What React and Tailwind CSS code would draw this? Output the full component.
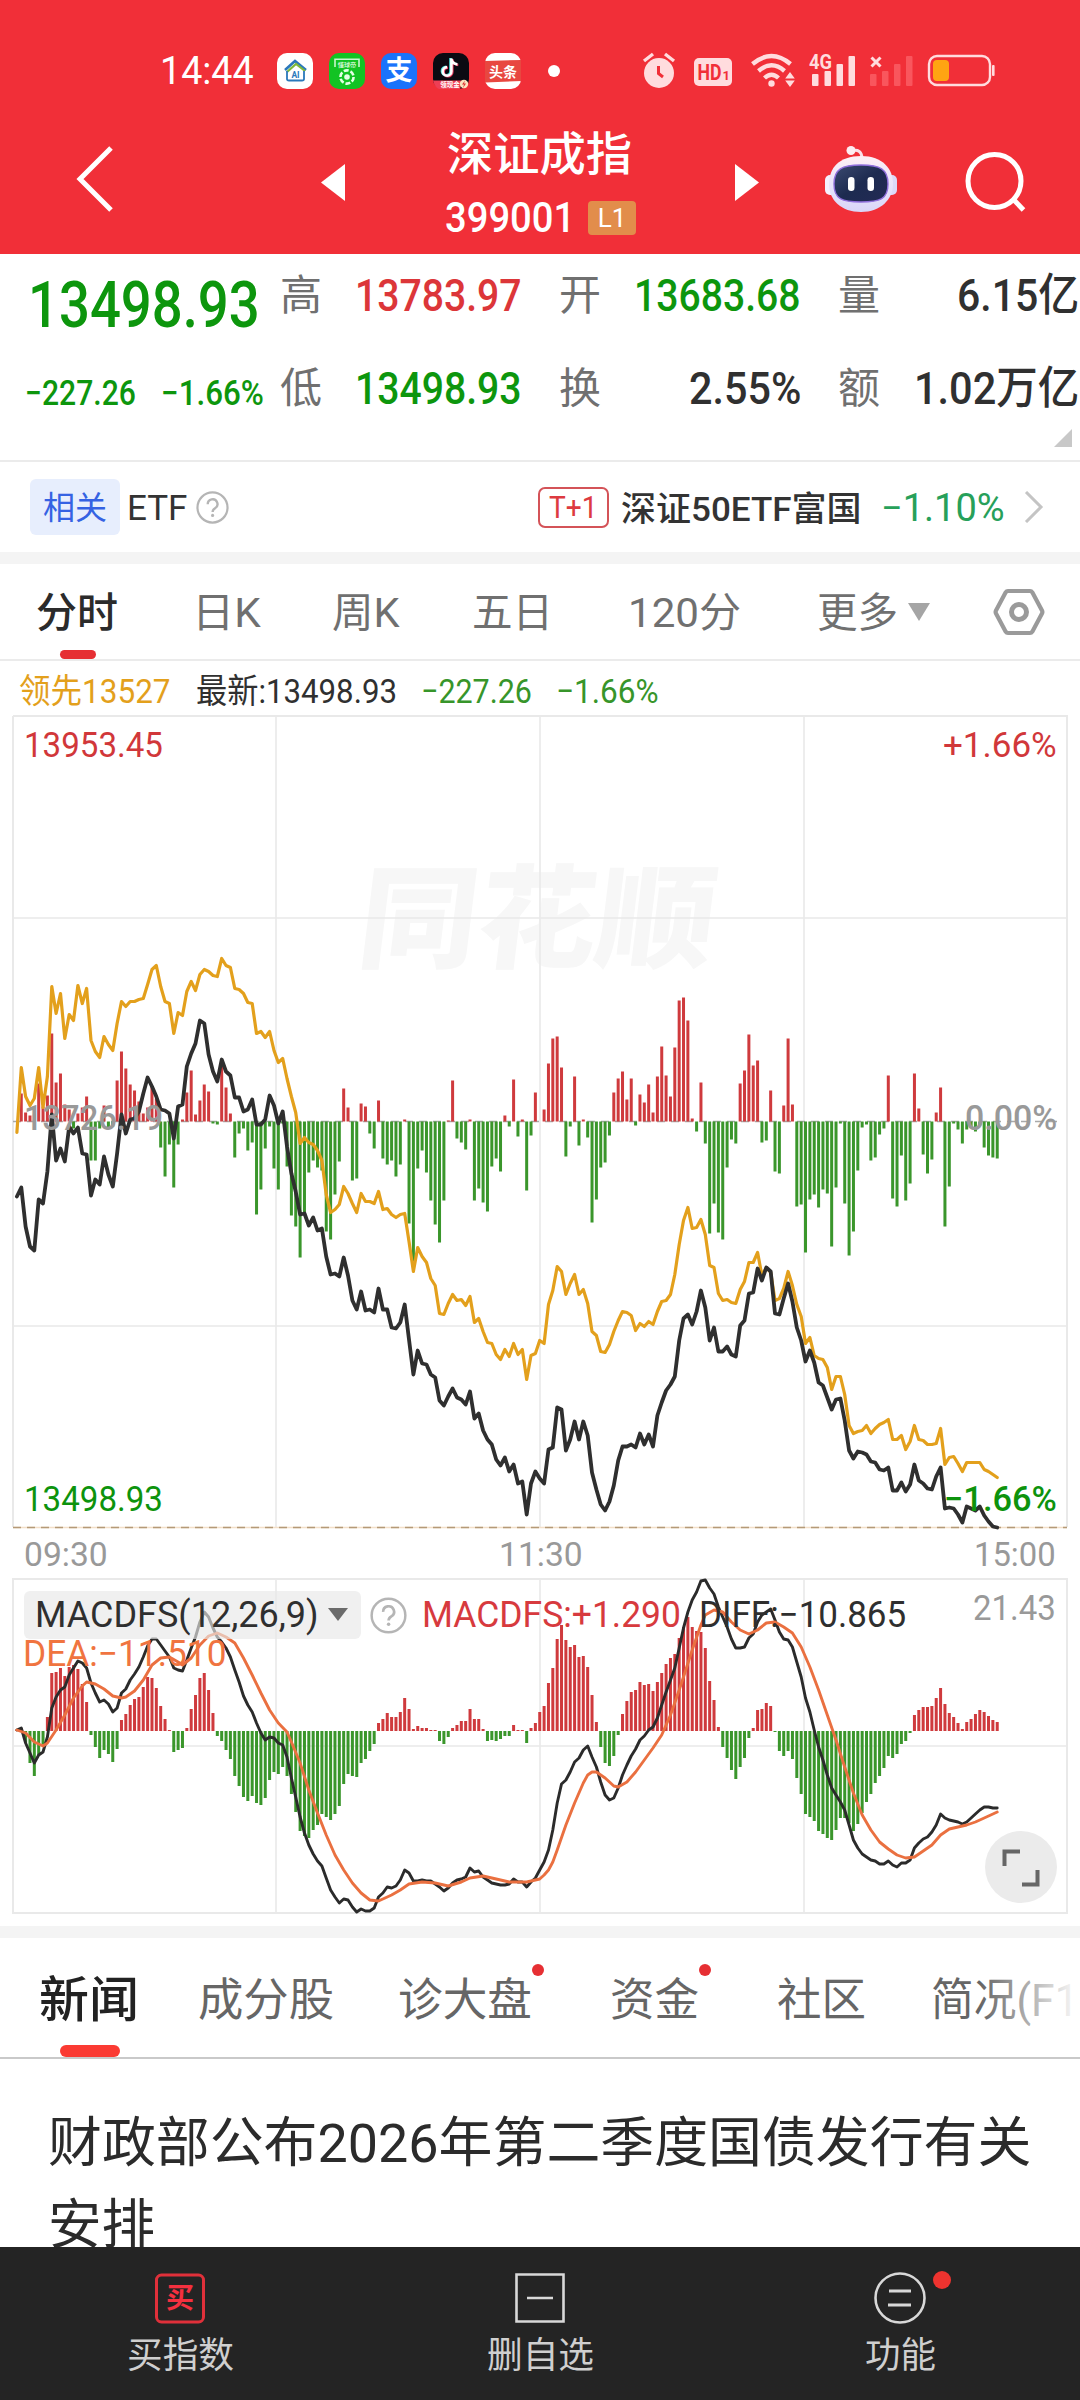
import { useLayoutEffect, useRef, useState } from "react";

const STEP = 4.357;
const X0 = 16.9;

// 成交量柱:正值向上(红),负值向下(绿)
const volumeBars = [
    0, 28, 9, 6, 7, 38, 15, 26, 88, 39, 48, 17, 12, -7, 8, 14, 25, -39, -39, -7,
    16, -7, -5, 41, 70, 53, 37, 31, 20, 8, 14, 35, 23, -26, -55, -23, -66, -23, 2, 29,
    51, 7, 21, 37, 30, -2, -3, 55, 34, 8, -36, -12, -7, -29, -21, -93, -68, -27, -5, -47,
    -68, -2, -45, -94, -105, -136, -92, -51, -39, -46, -49, -110, -118, -73, -40, 33, 14, -59, -57, 18,
    15, -12, -27, 21, -37, -43, -39, -55, -43, 2, -102, -140, -47, -29, -51, -79, -103, -121, -79, 1,
    41, -17, -21, -28, 2, -79, -67, -81, -90, -45, -37, -50, 6, -5, 42, -15, 2, -69, -14, 29,
    0, 12, 58, 83, 85, 54, -35, -5, 45, -24, 2, -16, -101, -78, -46, -41, -14, 29, 43, 50,
    22, 43, -4, 27, 19, 37, 9, 45, 75, 46, 25, 74, 121, 124, 101, 3, -10, 39, -22, -112,
    -82, -111, -118, -46, -18, -22, 38, 51, 87, 56, 61, -21, -19, 31, -50, -52, 16, 83, 17, -85,
    -83, -131, -78, -73, -86, -68, -72, -125, -66, -2, -82, -134, -110, -49, -6, -3, -39, -36, -13, -7,
    46, -77, -85, -34, -79, -62, 48, 13, -33, -52, -38, 9, 34, -105, -65, -2, -8, -22, -8, -6,
    -10, -4, -26, -34, -36, -37,
];

// 领先线
const leadLine = [
    -11, 54, 25, 16, 23, 54, 14, 45, 135, 108, 128, 83, 107, 101, 136, 118, 133, 81, 70, 64,
    85, 77, 71, 98, 120, 115, 120, 120, 122, 123, 137, 152, 156, 135, 120, 118, 88, 109, 106, 130,
    140, 131, 147, 152, 150, 146, 145, 163, 156, 154, 133, 132, 128, 119, 118, 88, 90, 84, 90, 71,
    59, 63, 43, 25, 9, -22, -16, -21, -23, -29, -39, -73, -91, -88, -83, -65, -72, -82, -91, -72,
    -80, -80, -82, -70, -88, -87, -93, -96, -93, -92, -120, -150, -126, -135, -141, -157, -164, -192, -193, -182,
    -173, -179, -178, -184, -175, -201, -197, -210, -221, -222, -233, -238, -228, -235, -222, -233, -228, -258, -234, -232,
    -219, -222, -183, -169, -145, -150, -173, -162, -153, -173, -168, -182, -210, -214, -230, -231, -223, -210, -199, -190,
    -191, -194, -209, -202, -205, -200, -203, -190, -180, -179, -173, -153, -123, -99, -86, -107, -106, -98, -113, -144,
    -146, -172, -179, -178, -181, -182, -168, -160, -141, -141, -131, -154, -146, -151, -179, -177, -167, -150, -164, -183,
    -195, -222, -216, -234, -237, -238, -246, -268, -255, -255, -273, -304, -312, -310, -309, -304, -312, -307, -303, -301,
    -298, -318, -318, -314, -328, -320, -304, -318, -319, -323, -323, -322, -307, -343, -336, -335, -342, -350, -341, -341,
    -341, -341, -348, -350, -353, -356,
];

// 最新价
const priceLine = [
    -75, -66, -105, -125, -129, -78, -82, -50, 7, -39, -27, -40, -5, -12, -6, -32, -33, -74, -58, -63,
    -35, -53, -65, -32, 7, -12, 2, 3, 10, 28, 44, 35, 25, 12, 11, 8, -17, 15, 17, 55,
    68, 78, 101, 98, 67, 50, 40, 62, 50, 46, 24, 24, 10, 12, 22, -3, -3, 2, 26, 16,
    -2, 10, -25, -52, -70, -93, -92, -104, -96, -109, -107, -135, -153, -152, -155, -136, -154, -179, -188, -170,
    -189, -188, -191, -167, -188, -188, -206, -207, -201, -183, -218, -253, -229, -242, -243, -253, -256, -279, -284, -275,
    -267, -276, -278, -283, -270, -297, -292, -309, -318, -323, -338, -344, -336, -350, -343, -362, -360, -393, -362, -350,
    -357, -362, -328, -326, -286, -288, -329, -318, -300, -318, -300, -314, -351, -368, -383, -389, -380, -364, -339, -325,
    -325, -323, -326, -312, -323, -313, -325, -294, -281, -269, -263, -255, -219, -197, -193, -203, -190, -169, -186, -219,
    -206, -230, -230, -225, -233, -235, -204, -199, -172, -171, -147, -159, -146, -150, -192, -193, -177, -162, -180, -206,
    -219, -240, -229, -241, -261, -264, -276, -288, -278, -277, -299, -329, -337, -330, -331, -333, -340, -341, -348, -349,
    -346, -369, -369, -361, -370, -363, -343, -359, -362, -367, -368, -355, -346, -387, -386, -387, -393, -401, -385, -387,
    -389, -385, -394, -400, -405, -406,
];

const macdBars = [
    1, 3, -12, -32, -45, -24, -15, 14, 58, 59, 63, 55, 64, 66, 62, 47, 29, -4, -16, -27,
    -19, -23, -31, -18, 11, 17, 26, 32, 34, 44, 54, 53, 43, 25, 12, 1, -21, -19, -17, 3,
    22, 36, 53, 58, 41, 18, -5, -10, -19, -28, -45, -55, -66, -70, -65, -72, -74, -67, -49, -41,
    -43, -36, -45, -63, -81, -100, -105, -107, -99, -94, -83, -86, -89, -83, -75, -53, -43, -45, -46, -32,
    -28, -20, -13, 8, 12, 18, 14, 14, 19, 33, 22, 2, 5, 3, 3, 1, 1, -10, -13, -6,
    3, 6, 10, 10, 22, 12, 12, 2, -10, -9, -10, -8, -5, -5, 6, 1, 1, -12, 3, 8,
    19, 25, 48, 63, 92, 106, 91, 84, 86, 74, 75, 64, 36, 9, -16, -32, -35, -25, -4, 17,
    30, 39, 41, 49, 46, 47, 40, 49, 58, 67, 73, 77, 93, 104, 114, 104, 100, 99, 83, 50,
    31, 4, -16, -27, -39, -48, -36, -27, -7, 3, 21, 22, 28, 25, -1, -20, -25, -20, -28, -47,
    -63, -83, -86, -90, -100, -103, -107, -109, -99, -87, -87, -92, -100, -93, -82, -71, -63, -52, -45, -37,
    -25, -27, -23, -13, -10, -2, 16, 21, 24, 24, 25, 33, 43, 27, 18, 14, 8, 2, 9, 12,
    17, 21, 19, 15, 11, 9,
];

const diffLine = [
    1, 3, -12, -22, -32, -24, -21, -6, 23, 34, 41, 44, 56, 63, 70, 68, 63, 48, 38, 29,
    31, 27, 19, 23, 38, 42, 51, 57, 64, 74, 85, 92, 92, 86, 80, 74, 63, 61, 60, 71,
    83, 94, 109, 119, 114, 103, 94, 89, 83, 74, 61, 49, 35, 26, 19, 8, -2, -9, -6, -7,
    -12, -14, -26, -47, -66, -86, -102, -114, -123, -130, -135, -147, -159, -166, -172, -168, -169, -176, -181, -178,
    -180, -180, -177, -166, -162, -156, -157, -155, -149, -139, -142, -150, -150, -149, -150, -150, -153, -156, -160, -157,
    -152, -149, -148, -146, -137, -141, -140, -146, -149, -152, -153, -154, -154, -153, -148, -151, -151, -156, -151, -147,
    -139, -131, -119, -99, -72, -53, -49, -41, -31, -27, -19, -15, -26, -36, -51, -64, -69, -67, -57, -44,
    -34, -25, -18, -9, -5, 1, 4, 13, 26, 39, 51, 63, 83, 103, 119, 131, 139, 150, 151, 143,
    137, 124, 114, 104, 92, 83, 83, 84, 93, 97, 109, 116, 119, 122, 111, 99, 92, 91, 84, 69,
    54, 33, 19, 1, -16, -29, -44, -57, -64, -71, -79, -94, -109, -117, -123, -126, -129, -130, -133, -133,
    -130, -134, -136, -132, -132, -129, -117, -112, -108, -106, -101, -94, -83, -87, -89, -90, -91, -93, -91, -87,
    -83, -79, -76, -76, -77, -77,
];

// DEA 只记录关键点 [分钟, 值]
const deaLine = [
    [0, 1], [2, -2], [4, -11], [6, -15], [7, -12], [9, 1], [11, 16], [13, 33], [15, 45], [16, 49], [18, 47],
    [20, 42], [22, 35], [24, 33], [25, 34], [27, 40], [29, 51], [31, 66], [33, 73], [35, 74], [37, 69], [38, 66],
    [40, 73], [42, 86], [44, 95], [46, 98], [48, 94], [50, 88], [52, 73], [54, 56], [56, 38], [58, 21], [60, 8],
    [62, -1], [63, -11], [65, -32], [67, -59], [69, -82], [71, -104], [73, -124], [75, -139], [77, -152], [79, -162],
    [81, -169], [83, -170], [86, -164], [88, -159], [90, -153], [93, -151], [96, -152], [99, -155], [102, -151],
    [104, -147], [107, -145], [110, -148], [113, -151], [117, -151], [120, -148], [121, -144], [122, -139], [123, -131],
    [124, -119], [126, -94], [128, -72], [130, -52], [131, -44], [132, -41], [133, -41], [135, -47], [137, -55],
    [138, -56], [140, -51], [142, -41], [144, -29], [146, -17], [148, -4], [150, 16], [152, 41], [153, 54], [155, 81],
    [157, 106], [158, 116], [160, 121], [162, 119], [164, 109], [166, 101], [168, 97], [170, 101], [172, 108],
    [174, 109], [176, 104], [178, 98], [180, 84], [182, 64], [184, 41], [186, 16], [188, -9], [190, -36], [192, -62],
    [194, -84], [196, -99], [198, -111], [200, -118], [202, -124], [204, -127], [206, -126], [208, -120], [210, -114],
    [212, -104], [214, -98], [216, -96], [218, -94], [220, -91], [222, -87], [224, -83], [225, -81],
];

const toPoints = (series, zero) =>
    series
        .map((p, i) => (Array.isArray(p) ? p : [i, p]))
        .map(([i, v]) => `${(X0 + i * STEP).toFixed(1)},${zero - v}`)
        .join(" ");

// 把一行文字压缩/拉伸到固定宽度
function Fit({ w, className = "", children }) {
    const ref = useRef(null);
    const [scale, setScale] = useState(1);

    useLayoutEffect(() => {
        setScale(w / ref.current.offsetWidth);
    }, [w]);

    return (
        <span className={`block shrink-0 whitespace-nowrap leading-none ${className}`} style={{ width: w }}>
            <span ref={ref} className="inline-block origin-left" style={{ transform: `scaleX(${scale})` }}>
                {children}
            </span>
        </span>
    );
}

function Bars({ data, zero }) {
    return data.map((v, i) =>
        v === 0 ? null : (
            <rect
                key={i}
                x={X0 + i * STEP - 1.5}
                y={v > 0 ? zero - v : zero}
                width="3"
                height={Math.abs(v)}
                fill={v > 0 ? "#cf3a3d" : "#3a962b"}
            />
        )
    );
}

function Help({ size, className = "" }) {
    return (
        <svg width={size} height={size} viewBox="0 0 36 36" fill="none" stroke="#b5b5b5" strokeWidth="2.4" className={className}>
            <circle cx="18" cy="18" r="16.4" />
            <path d="M12.8 14.5a5.3 5.3 0 1 1 8 4.4c-2 1.2-2.7 2-2.7 4" strokeWidth="2.6" />
            <circle cx="18.1" cy="26.6" r="1.7" fill="#b5b5b5" stroke="none" />
        </svg>
    );
}

function StatusBar() {
    return (
        <div className="flex h-[110px] items-center pt-[32px] pl-[160px]">
            <Fit w={94} className="text-[38px]">14:44</Fit>
            <div className="ml-[23px] flex gap-[16px]">
                <svg width="36" height="36" viewBox="0 0 36 36">
                    <rect width="36" height="36" rx="10" fill="#fff" />
                    <path d="M8 17 18 8l11 9" fill="none" stroke="#2a78bb" strokeWidth="2.6" />
                    <path d="M10 19l9-8 9 7" fill="none" stroke="#7fb93b" strokeWidth="2.2" />
                    <path d="M10 18v8q0 1.5 2 1.5h13q2 0 2-1.5v-8" fill="none" stroke="#2a78bb" strokeWidth="1.8" />
                    <text x="18.5" y="24.5" fontSize="8.5" fontWeight="700" textAnchor="middle" fill="#2a78bb">AI</text>
                </svg>
                <svg width="36" height="36" viewBox="0 0 36 36">
                    <rect width="36" height="36" rx="10" fill="#12c323" />
                    <path d="M6 14V6.2h24V14" fill="none" stroke="#c9f5cc" strokeWidth="1.6" />
                    <text x="18" y="13.5" fontSize="6.2" fontWeight="700" textAnchor="middle" fill="#c9f5cc">懂球帝</text>
                    <circle cx="18" cy="24" r="6.6" fill="none" stroke="#e4ffe5" strokeWidth="2.6" strokeDasharray="5 1.9" />
                    <circle cx="18" cy="24" r="2.8" fill="#e4ffe5" />
                </svg>
                <span className="flex h-9 w-9 items-center justify-center rounded-[10px] bg-[#1a73fb] text-[27px] leading-none font-bold text-white">支</span>
                <svg width="36" height="36" viewBox="0 0 36 36">
                    <rect width="36" height="36" rx="10" fill="#0b0a12" />
                    <g fill="none" strokeWidth="2.6">
                        <path d="M17.5 5v13a4.3 4.3 0 1 1-4.3-4.3M17.5 6q1.3 4.5 6 5" stroke="#4ee0dc" />
                        <path d="M19.3 6v13a4.3 4.3 0 1 1-4.3-4.3M19.3 7q1.3 4.5 6 5" stroke="#e8345a" />
                        <path d="M18.4 5.4v13a4.3 4.3 0 1 1-4.3-4.3M18.4 6.4q1.3 4.5 6 5" stroke="#fff" />
                    </g>
                    <path d="M0 27.5h30l-3 8.5H6q-4-1-6-8.5z" fill="#ee3e55" />
                    <text x="17" y="34" fontSize="6.5" fontWeight="700" textAnchor="middle" fill="#fff">领现金</text>
                    <circle cx="31" cy="31" r="4.2" fill="#fbe3c0" />
                    <path d="M32 27.5l-3 4h2l-1 3.5 3-4.5h-2z" fill="#d33" />
                </svg>
                <svg width="36" height="36" viewBox="0 0 36 36">
                    <rect width="36" height="36" rx="10" fill="#fff" />
                    <path d="M0 8l36-1v21l-36 1.500z" fill="#e84740" />
                    <text x="18" y="23.500" fontSize="14" fontWeight="700" textAnchor="middle" fill="#fff">头条</text>
                </svg>
            </div>
            <span className="ml-[27px] h-3 w-3 rounded-full bg-white" />
            <svg className="ml-[79px]" width="360" height="40" viewBox="640 51 360 40" fill="#ffdcde">
                {/* 闹钟 */}
                <circle cx="660" cy="73" r="15" />
                <path d="M645 61l9-7M675 61l-9-7" stroke="#ffdcde" strokeWidth="3.4" />
                <path d="M659.500 66v7.500l4.500 3.500" fill="none" stroke="#f12f38" strokeWidth="3" />
                {/* HD */}
                <rect x="695" y="58" width="38" height="28" rx="5" />
                <text x="698.500" y="80" fontSize="22" fontWeight="700" textLength="24" lengthAdjust="spacingAndGlyphs" fill="#f12f38">HD</text>
                <text x="723.500" y="80" fontSize="13" fontWeight="700" fill="#f12f38">1</text>
                {/* WiFi */}
                <g fill="none" stroke="#ffdcde" strokeWidth="4.400">
                    <path d="M753.500 64q19-16 38 0" />
                    <path d="M759.500 71q13-11.500 26 0" />
                    <path d="M765.500 78q7-6.500 14 0" />
                </g>
                <circle cx="772.500" cy="83.500" r="3.200" />
                <path d="M791 72l4.800 6.500h-9.600zM791 87l4.800-6.500h-9.600z" />
                {/* 信号 */}
                <text x="810" y="69" fontSize="20" fontWeight="700" textLength="23" lengthAdjust="spacingAndGlyphs">4G</text>
                <rect x="813" y="74" width="6.500" height="12" rx="1" />
                <rect x="825.500" y="71" width="6.500" height="15" rx="1" />
                <rect x="837.500" y="64" width="6.500" height="22" rx="1" />
                <rect x="849.500" y="56" width="6.500" height="30" rx="1" />
                <path d="M872.500 57.500l9 9M881.500 57.500l-9 9" stroke="#ffdcde" strokeWidth="3" />
                <g fill="#f9565d">
                    <rect x="871" y="74" width="6.500" height="12" rx="1" />
                    <rect x="883" y="71" width="6.500" height="15" rx="1" />
                    <rect x="895" y="64" width="6.500" height="22" rx="1" />
                    <rect x="907" y="56" width="6.500" height="30" rx="1" />
                </g>
                {/* 电池 */}
                <rect x="930" y="56" width="61" height="29" rx="8" fill="none" stroke="#ffdcde" strokeWidth="2.400" />
                <rect x="934" y="60" width="16" height="21" rx="4" fill="#ffa412" />
                <rect x="993" y="65" width="2.600" height="11" rx="1" />
            </svg>
        </div>
    );
}

function Header() {
    return (
        <header className="h-[254px] bg-[#f12f38] text-white">
            <StatusBar />
            <div className="flex h-[144px] pl-[76px]">
                <svg className="mt-[36px]" width="37" height="66" viewBox="0 0 37 66" fill="none" stroke="#fff" strokeWidth="5">
                    <path d="M35 2 4 33l31 31" />
                </svg>
                <svg className="mt-[54px] ml-[208px]" width="24" height="37" viewBox="0 0 24 37" fill="#fff">
                    <path d="M24 0v37L0 18.500z" />
                </svg>
                <div className="mt-[21px] ml-[102px] w-[190px]">
                    <Fit w={185} className="text-[46px] font-medium">深证成指</Fit>
                    <div className="mt-[20px] -ml-[2px] flex h-[42px] items-center gap-[13px]">
                        <Fit w={130} className="text-[42px] font-medium">399001</Fit>
                        <span className="flex h-[34px] w-[48px] items-center justify-center rounded-[4px] bg-[#e28d4b] text-[26px] leading-none">L1</span>
                    </div>
                </div>
                <svg className="mt-[54px] ml-[98px]" width="24" height="37" viewBox="0 0 24 37" fill="#fff">
                    <path d="M0 0v37l24-18.500z" />
                </svg>
                <svg className="mt-[35px] ml-[66px]" width="73" height="68" viewBox="0 0 73 68">
                    <defs>
                        <linearGradient id="shell" x1="0" y1="0" x2="0" y2="1">
                            <stop offset="0" stopColor="#fdeff5" />
                            <stop offset="0.600" stopColor="#e6e2fb" />
                            <stop offset="1" stopColor="#d9d6f8" />
                        </linearGradient>
                        <linearGradient id="visor" x1="0" y1="0" x2="1" y2="1">
                            <stop offset="0" stopColor="#3b4a70" />
                            <stop offset="0.500" stopColor="#1d2b50" />
                            <stop offset="1" stopColor="#232a55" />
                        </linearGradient>
                    </defs>
                    <path d="M26 6q11-3 11 8" fill="none" stroke="#fbdfe8" strokeWidth="3" />
                    <circle cx="26" cy="5.500" r="4.500" fill="#fdecf1" />
                    <rect x="0" y="30" width="12" height="20" rx="5" fill="#f5f0fd" />
                    <rect x="60" y="30" width="12" height="20" rx="5" fill="#dcd9f8" />
                    <path d="M36 11C58 11 68 24 68 39S56 67 36 67 4 55 4 39s10-28 32-28z" fill="url(#shell)" />
                    <path d="M36 20c19 0 27 4 27 19s-8 18-27 18S9 54 9 39s8-19 27-19z" fill="url(#visor)" stroke="#8f6fdb" strokeWidth="1.400" />
                    <rect x="23" y="32" width="6.500" height="14" rx="3.200" fill="#fff" />
                    <rect x="42.500" y="32" width="6.500" height="14" rx="3.200" fill="#fff" />
                </svg>
                <svg className="mt-[41px] ml-[67px]" width="62" height="62" viewBox="0 0 62 62" fill="none" stroke="#fff" strokeWidth="5">
                    <circle cx="29.500" cy="30" r="26.500" />
                    <path d="M48 48l10.500 11" />
                </svg>
            </div>
        </header>
    );
}

function Quote({ label, value, w, valueClass, cell }) {
    return (
        <div className={`flex items-center justify-between ${cell}`}>
            <span className="text-[42px] leading-none text-[#707070]">{label}</span>
            <Fit w={w} className={`text-[45px] font-medium ${valueClass}`}>{value}</Fit>
        </div>
    );
}

function Quotes() {
    return (
        <section className="relative flex h-[208px] border-b-2 border-[#ebebeb]">
            <div className="w-[280px] pt-[19px] text-[#0d960d]">
                <Fit w={232} className="ml-[28px] text-[65px] font-medium">13498.93</Fit>
                <div className="mt-[38px] flex">
                    <Fit w={111} className="ml-[25px] text-[35px] font-medium">−227.26</Fit>
                    <Fit w={103} className="ml-[25px] text-[35px] font-medium">−1.66%</Fit>
                </div>
            </div>
            <div className="flex flex-col">
                <div className="flex h-[83px] gap-[37px]">
                    <Quote label="高" value="13783.97" w={167} valueClass="text-[#dc3639]" cell="w-[242px]" />
                    <Quote label="开" value="13683.68" w={167} valueClass="text-[#0d960d]" cell="w-[242px]" />
                    <Quote label="量" value="6.15亿" w={122} valueClass="text-[#303030]" cell="w-[241px]" />
                </div>
                <div className="mt-[10px] flex h-[83px] gap-[37px]">
                    <Quote label="低" value="13498.93" w={167} valueClass="text-[#0d960d]" cell="w-[242px]" />
                    <Quote label="换" value="2.55%" w={112} valueClass="text-[#303030]" cell="w-[242px]" />
                    <Quote label="额" value="1.02万亿" w={165} valueClass="text-[#303030]" cell="w-[241px]" />
                </div>
            </div>
            <svg className="absolute right-[8px] bottom-[13px]" width="18" height="18" viewBox="0 0 18 18" fill="#c8c8c8">
                <path d="M18 0v18H0z" />
            </svg>
        </section>
    );
}

function EtfRow() {
    return (
        <section className="flex h-[90px] items-center pl-[30px]">
            <span className="flex h-[56px] w-[90px] items-center justify-center rounded-[6px] bg-[#e7eefd] pt-[2px] text-[32px] leading-none text-[#3562e3]">相关</span>
            <Fit w={60} className="ml-[7px] pt-[2px] text-[35px] text-[#333]">ETF</Fit>
            <Help size={33} className="ml-[9px]" />
            <span className="ml-[309px] flex h-[41px] w-[71px] items-center justify-center rounded-[7px] border-2 border-[#d45358] text-[#dd3a40]">
                <Fit w={49} className="text-[31px]">T+1</Fit>
            </span>
            <Fit w={241} className="ml-[12px] pt-[3px] text-[34px] font-medium text-[#333]">深证50ETF富国</Fit>
            <Fit w={124} className="ml-[19px] pt-[2px] text-[38px] text-[#27a05a]">−1.10%</Fit>
            <svg className="ml-[19px]" width="20" height="32" viewBox="0 0 20 32" fill="none" stroke="#c4c4c4" strokeWidth="3">
                <path d="M2 1l15 15L2 31" />
            </svg>
        </section>
    );
}

function PeriodTabs() {
    return (
        <nav className="flex h-[97px] items-center border-b-2 border-[#ebebeb] pl-[36px] text-[41px] text-[#707070]">
            <span className="relative flex h-full items-center font-medium text-[#2b2b2b]">
                <Fit w={82} className="pt-[3px]">分时</Fit>
                <span className="absolute bottom-0 left-[24px] h-[9px] w-[36px] rounded-[5px] bg-[#e62f33]" />
            </span>
            <Fit w={69} className="ml-[74px] pt-[3px]">日K</Fit>
            <Fit w={68} className="ml-[71px] pt-[3px]">周K</Fit>
            <Fit w={81} className="ml-[72px] pt-[3px]">五日</Fit>
            <Fit w={113} className="ml-[75px] pt-[3px]">120分</Fit>
            <Fit w={81} className="ml-[76px] pt-[3px]">更多</Fit>
            <svg className="ml-[9px]" width="24" height="20" viewBox="0 0 24 20" fill="#a5a5a5">
                <path d="M1 1h22L12 19z" />
            </svg>
            <svg className="ml-[62px]" width="52" height="48" viewBox="0 0 52 48" fill="none" stroke="#9a9a9a" strokeWidth="4.200">
                <path d="M15 3h22q1.500 0 2.300 1.300L49 22.500q.8 1.500 0 3L39.300 43.700Q38.500 45 37 45H15q-1.500 0-2.300-1.300L3 25.500q-.8-1.500 0-3L12.700 4.300Q13.500 3 15 3z" />
                <circle cx="26" cy="24" r="7.500" strokeWidth="5" />
            </svg>
        </nav>
    );
}

function PriceChart() {
    const zero = 406.5;
    return (
        <section className="relative h-[815px] text-[35px]">
            <svg width="1080" height="815" viewBox="0 0 1080 815" className="block">
                <text
                    transform="translate(355 244) skewX(-7)"
                    fontSize="112"
                    fontWeight="900"
                    fill="#f7f7f7"
                    textLength="356"
                    lengthAdjust="spacingAndGlyphs"
                    fontFamily="Noto Sans CJK SC"
                >
                    同花顺
                </text>
                <g stroke="#e9e9e9" strokeWidth="2" fill="none">
                    <path d="M13 1h1054v811M13 1v811" />
                    <path d="M276 1v811M540 1v811M804 1v811M13 203h1054M13 611h1054" strokeWidth="1.600" />
                </g>
                <path d="M13 406.500h1048" stroke="#a9a9a9" strokeWidth="1.600" strokeDasharray="8 6" />
                <path d="M13 812.500h1054" stroke="#f3dfc8" strokeWidth="1.500" />
                <path d="M13 812.500h1054" stroke="#b59a78" strokeWidth="1.600" strokeDasharray="8 6" />
                <Bars data={volumeBars} zero={zero} />
                <g fill="none" strokeLinejoin="round" strokeLinecap="round">
                    <polyline points={toPoints(leadLine, zero)} stroke="#e3a01c" strokeWidth="3.200" />
                    <polyline points={toPoints(priceLine, zero)} stroke="#2f2f2f" strokeWidth="3.800" />
                </g>
            </svg>
            <Fit w={139} className="absolute top-[13px] left-[24px] text-[#d1373a]">13953.45</Fit>
            <Fit w={114} className="absolute top-[13px] left-[943px] text-[#d1373a]">+1.66%</Fit>
            <Fit w={139} className="absolute top-[386px] left-[24px] font-medium text-[#999]">13726.19</Fit>
            <Fit w={92} className="absolute top-[386px] left-[965px] font-medium text-[#999]">0.00%</Fit>
            <Fit w={139} className="absolute top-[767px] left-[24px] text-[#0d930d]">13498.93</Fit>
            <Fit w={113} className="absolute top-[767px] left-[944px] font-medium text-[#0d930d]">−1.66%</Fit>
        </section>
    );
}

function MacdChart() {
    const zero = 153;
    return (
        <section className="relative h-[348px] text-[36px]">
            <svg width="1080" height="348" viewBox="0 0 1080 348" className="block">
                <g stroke="#e9e9e9" strokeWidth="2" fill="none">
                    <path d="M13 1h1054v334H13z" />
                    <path d="M276 1v334M540 1v334M804 1v334M13 168h1054" strokeWidth="1.600" />
                </g>
                <Bars data={macdBars} zero={zero} />
                <g fill="none" strokeLinejoin="round" strokeLinecap="round" strokeWidth="2.900">
                    <polyline points={toPoints(diffLine, zero)} stroke="#2b2b2b" />
                    <polyline points={toPoints(deaLine, zero)} stroke="#ea7040" />
                </g>
            </svg>
            <span className="absolute top-[13px] left-[24px] h-[48px] w-[337px] rounded-[6px] bg-[#e8e8e8]/65" />
            <div className="absolute top-[13px] left-[35px] flex h-[48px] items-center text-[#2f2f2f]">
                <Fit w={284}>MACDFS(12,26,9)</Fit>
                <svg className="ml-[9px]" width="20" height="14" viewBox="0 0 20 14" fill="#6b6b6b">
                    <path d="M0 0h20L10 13z" />
                </svg>
                <Help size={37} className="ml-[22px]" />
                <Fit w={259} className="ml-[15px] text-[#d73a3e]">MACDFS:+1.290</Fit>
                <Fit w={207} className="ml-[18px]">DIFF:−10.865</Fit>
            </div>
            <Fit w={204} className="absolute top-[58px] left-[23px] text-[#f07440]">DEA:−11.510</Fit>
            <Fit w={83} className="absolute top-[13px] left-[973px] text-[35px] text-[#999]">21.43</Fit>
            <svg className="absolute top-[253px] left-[985px]" width="72" height="72" viewBox="0 0 72 72" fill="none" stroke="#666" strokeWidth="4">
                <circle cx="36" cy="36" r="36" fill="#ebebeb" stroke="none" />
                <path d="M19.500 35V20.500H35M37 53.500h15.500V39" />
            </svg>
        </section>
    );
}

function NewsTabs() {
    return (
        <nav className="relative flex h-[121px] items-center overflow-hidden border-b-2 border-[#c9c9c9] pb-[1px] pl-[39px] text-[45px] text-[#666]">
            <span className="relative flex h-full items-center text-[49px] font-medium text-[#222]">
                <Fit w={100} className="pt-[7px]">新闻</Fit>
                <span className="absolute -bottom-px left-[21px] h-[12px] w-[60px] rounded-[6px] bg-[#fb3b33]" />
            </span>
            <Fit w={136} className="ml-[59px] pt-[7px]">成分股</Fit>
            <span className="relative ml-[64px]">
                <Fit w={134} className="pt-[7px]">诊大盘</Fit>
                <span className="absolute -top-[7px] left-[134px] h-3 w-3 rounded-full bg-[#e62f33]" />
            </span>
            <span className="relative ml-[78px]">
                <Fit w={89} className="pt-[7px]">资金</Fit>
                <span className="absolute -top-[7px] left-[89px] h-3 w-3 rounded-full bg-[#e62f33]" />
            </span>
            <Fit w={89} className="ml-[78px] pt-[7px]">社区</Fit>
            <Fit w={187} className="ml-[65px] pt-[7px]">简况(F10)</Fit>
            <span className="absolute top-0 right-0 h-[116px] w-[100px] bg-gradient-to-r from-white/0 to-white" />
        </nav>
    );
}

function BottomBar() {
    return (
        <footer className="grid h-[153px] grid-cols-3 bg-[#242424] pt-[25px] text-[36px] text-[#cfcfcf]">
            <div className="flex flex-col items-center">
                <svg width="52" height="52" viewBox="0 0 52 52">
                    <rect x="2.500" y="3" width="47" height="47" rx="5" fill="none" stroke="#e0303a" strokeWidth="3" />
                    <text x="26" y="36" fontSize="28" fontWeight="700" textAnchor="middle" fill="#f5303f">买</text>
                </svg>
                <Fit w={107} className="mt-[14px]">买指数</Fit>
            </div>
            <div className="flex flex-col items-center">
                <svg width="52" height="52" viewBox="0 0 52 52" fill="none" stroke="#d8d8d8" strokeWidth="2.600">
                    <path d="M2.500 2.500h47v47h-47zM13 26h26" />
                </svg>
                <Fit w={107} className="mt-[14px]">删自选</Fit>
            </div>
            <div className="flex flex-col items-center">
                <span className="relative">
                    <svg width="52" height="52" viewBox="0 0 52 52" fill="none" stroke="#d8d8d8" strokeWidth="2.600">
                        <circle cx="26" cy="26" r="24.500" />
                        <path d="M15 19h22M14 33h23" strokeWidth="3" />
                    </svg>
                    <span className="absolute -top-[1px] left-[59px] h-[18px] w-[18px] rounded-full bg-[#ee332f]" />
                </span>
                <Fit w={71} className="mt-[14px]">功能</Fit>
            </div>
        </footer>
    );
}

export default function App() {
    return (
        <div className="flex h-[2400px] w-[1080px] flex-col overflow-hidden bg-white font-[Roboto,'Noto_Sans_CJK_SC',sans-serif]">
            <Header />
            <Quotes />
            <EtfRow />
            <div className="h-[12px] bg-[#f4f4f4]" />
            <PeriodTabs />
            <div className="flex h-[54px] items-center pt-[6px] pl-[19px] text-[34px] text-[#303030]">
                <Fit w={152} className="text-[#e3a01c]">领先13527</Fit>
                <Fit w={201} className="ml-[25px]">最新:13498.93</Fit>
                <Fit w={111} className="ml-[24px] text-[#37952a]">−227.26</Fit>
                <Fit w={103} className="ml-[24px] text-[#37952a]">−1.66%</Fit>
            </div>
            <PriceChart />
            <div className="flex h-[48px] items-center justify-between pr-[24px] pl-[24px] text-[34px] text-[#999]">
                <Fit w={84}>09:30</Fit>
                <Fit w={84}>11:30</Fit>
                <Fit w={82}>15:00</Fit>
            </div>
            <MacdChart />
            <div className="h-[12px] bg-[#f4f4f4]" />
            <NewsTabs />
            <article className="flex h-[188px] flex-col gap-[28px] overflow-hidden pt-[58px] pl-[48px] text-[54px] text-[#2b2b2b]">
                <Fit w={983}>财政部公布2026年第二季度国债发行有关</Fit>
                <Fit w={107}>安排</Fit>
            </article>
            <BottomBar />
        </div>
    );
}
